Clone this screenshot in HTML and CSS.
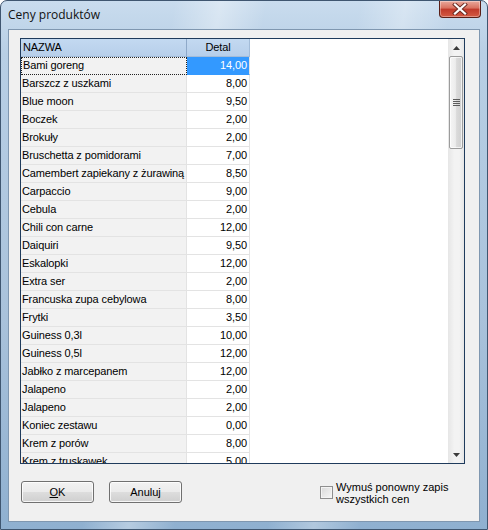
FILE: index.html
```html
<!DOCTYPE html>
<html>
<head>
<meta charset="utf-8">
<link rel="stylesheet" href="styles.css">
</head>
<body>
<div class="window">
  <div class="titlebar">
    <span class="title">Ceny produktów</span>
    <div class="close">
      <svg width="16" height="12" viewBox="0 0 16 12"><path d="M3 1.5 L13 10.5 M13 1.5 L3 10.5" stroke="#6a2a22" stroke-width="4" stroke-linecap="square"/><path d="M3 1.5 L13 10.5 M13 1.5 L3 10.5" stroke="#ffffff" stroke-width="2.2" stroke-linecap="square"/></svg>
    </div>
  </div>
  <div class="client">
    <div class="listbox">
      <div class="table">
        <div class="row head"><div class="c1">NAZWA</div><div class="c2">Detal</div><div class="c3"></div></div>
        <div class="row focus"><div class="c1">Bami goreng</div><div class="c2 sel">14,00</div><div class="c3"></div></div>
        <div class="row"><div class="c1">Barszcz z uszkami</div><div class="c2">8,00</div><div class="c3"></div></div>
        <div class="row"><div class="c1">Blue moon</div><div class="c2">9,50</div><div class="c3"></div></div>
        <div class="row"><div class="c1">Boczek</div><div class="c2">2,00</div><div class="c3"></div></div>
        <div class="row"><div class="c1">Brokuły</div><div class="c2">2,00</div><div class="c3"></div></div>
        <div class="row"><div class="c1">Bruschetta z pomidorami</div><div class="c2">7,00</div><div class="c3"></div></div>
        <div class="row"><div class="c1">Camembert zapiekany z żurawiną</div><div class="c2">8,50</div><div class="c3"></div></div>
        <div class="row"><div class="c1">Carpaccio</div><div class="c2">9,00</div><div class="c3"></div></div>
        <div class="row"><div class="c1">Cebula</div><div class="c2">2,00</div><div class="c3"></div></div>
        <div class="row"><div class="c1">Chili con carne</div><div class="c2">12,00</div><div class="c3"></div></div>
        <div class="row"><div class="c1">Daiquiri</div><div class="c2">9,50</div><div class="c3"></div></div>
        <div class="row"><div class="c1">Eskalopki</div><div class="c2">12,00</div><div class="c3"></div></div>
        <div class="row"><div class="c1">Extra ser</div><div class="c2">2,00</div><div class="c3"></div></div>
        <div class="row"><div class="c1">Francuska zupa cebylowa</div><div class="c2">8,00</div><div class="c3"></div></div>
        <div class="row"><div class="c1">Frytki</div><div class="c2">3,50</div><div class="c3"></div></div>
        <div class="row"><div class="c1">Guiness 0,3l</div><div class="c2">10,00</div><div class="c3"></div></div>
        <div class="row"><div class="c1">Guiness 0,5l</div><div class="c2">12,00</div><div class="c3"></div></div>
        <div class="row"><div class="c1">Jabłko z marcepanem</div><div class="c2">12,00</div><div class="c3"></div></div>
        <div class="row"><div class="c1">Jalapeno</div><div class="c2">2,00</div><div class="c3"></div></div>
        <div class="row"><div class="c1">Jalapeno</div><div class="c2">2,00</div><div class="c3"></div></div>
        <div class="row"><div class="c1">Koniec zestawu</div><div class="c2">0,00</div><div class="c3"></div></div>
        <div class="row"><div class="c1">Krem z porów</div><div class="c2">8,00</div><div class="c3"></div></div>
        <div class="row"><div class="c1">Krem z truskawek</div><div class="c2">5,00</div><div class="c3"></div></div>
      </div>
      <div class="scrollbar">
        <div class="arrow up"><svg width="7" height="4" viewBox="0 0 7 4"><path d="M0 4 L3.5 0 L7 4 Z" fill="#3c3c3c"/></svg></div>
        <div class="thumb"><span class="grip"></span><span class="grip"></span><span class="grip"></span><span class="grip"></span></div>
        <div class="track"></div>
        <div class="arrow down"><svg width="7" height="4" viewBox="0 0 7 4"><path d="M0 0 L7 0 L3.5 4 Z" fill="#3c3c3c"/></svg></div>
      </div>
    </div>
    <div class="bottom">
      <button class="btn"><u>O</u>K</button>
      <button class="btn">Anuluj</button>
      <label class="check">
        <span class="box"></span>
        <span class="label">Wymuś ponowny zapis<br>wszystkich cen</span>
      </label>
    </div>
  </div>
</div>
</body>
</html>
```

FILE: styles.css
```css
html, body {
  margin: 0;
  padding: 0;
}
body {
  width: 488px;
  height: 530px;
  overflow: hidden;
  background: #ffffff;
  font-family: "Liberation Sans", Arial, sans-serif;
  font-size: 11px;
  color: #000;
}
.window {
  box-sizing: border-box;
  width: 488px;
  height: 530px;
  display: flex;
  flex-direction: column;
  border: 1px solid #3f5670;
  border-radius: 7px 7px 0 0;
  background:
    linear-gradient(100deg, rgba(255,255,255,0) 30%, rgba(255,255,255,0.35) 38%, rgba(255,255,255,0) 46%, rgba(255,255,255,0) 62%, rgba(255,255,255,0.3) 70%, rgba(255,255,255,0) 78%),
    linear-gradient(to bottom, #c9dcee 0%, #b8cfe5 10%, #a9c2db 60%, #8fb0d0 100%);
}
.titlebar {
  height: 28px;
  display: flex;
  align-items: flex-start;
  padding-left: 7px;
  padding-right: 6px;
}
.title {
  font-family: "Open Sans", "Noto Sans", sans-serif;
  font-size: 12px;
  line-height: 14px;
  margin-top: 7px;
  color: #111;
}
.close {
  margin-left: auto;
  width: 42px;
  height: 17px;
  box-sizing: border-box;
  border: 1px solid #5a1f17;
  border-top: none;
  border-radius: 0 0 4px 4px;
  background: linear-gradient(to bottom, #e9a99c 0%, #d9705e 45%, #c0392a 50%, #d45a43 100%);
  display: flex;
  align-items: center;
  justify-content: center;
  box-shadow: inset 0 0 0 1px rgba(255,255,255,0.35);
}
.client {
  flex: 1;
  margin: 0 7px 7px 7px;
  box-sizing: border-box;
  border: 1px solid #7f97b0;
  background: #f0f0f0;
  display: flex;
  flex-direction: column;
  padding: 8px 14px 0 11px;
}
.listbox {
  height: 426px;
  box-sizing: border-box;
  border: 1px solid #1f3b5c;
  display: flex;
  background: #ffffff;
}
.table {
  flex: 1;
  overflow: hidden;
}
.row {
  display: grid;
  grid-template-columns: 166px 63px 1fr;
  height: 18px;
}
.row > div {
  box-sizing: border-box;
  height: 18px;
  line-height: 16px;
  white-space: nowrap;
  overflow: hidden;
  letter-spacing: -0.12px;
}
.c1 {
  background: #f2f2f2;
  border-bottom: 1px solid #e3e3e3;
  border-right: 1px solid #e3e3e3;
  padding-left: 1px;
}
.c2 {
  background: #ffffff;
  border-bottom: 1px solid #e3e3e3;
  border-right: 1px solid #e3e3e3;
  text-align: right;
  padding-right: 2px;
}
.c3 {
  background: #ffffff;
}
.head .c1, .head .c2 {
  background: linear-gradient(to bottom, #c3d9f1 0%, #b7cfea 100%);
  border-bottom: 1px solid #a3bcd8;
  border-right: 1px solid #8ea9c9;
}
.head .c2 {
  text-align: center;
  padding-right: 0;
  border-right: 1px solid #a3bcd8;
}
.head .c1 {
  padding-left: 2px;
}
.focus .c1 {
  border: 1px dotted #222;
  line-height: 15px;
}
.c2.sel {
  background: #3399ff;
  color: #ffffff;
  border-bottom-color: #3399ff;
}
.scrollbar {
  width: 16px;
  display: flex;
  flex-direction: column;
  background: linear-gradient(to right, #e6e6e6, #f3f3f3 40%, #f3f3f3 70%, #e6e6e6);
}
.arrow {
  height: 17px;
  display: flex;
  align-items: center;
  justify-content: center;
}
.thumb {
  height: 93px;
  margin: 0 1px;
  box-sizing: border-box;
  border: 1px solid #9c9c9c;
  border-radius: 2px;
  background: linear-gradient(to right, #f5f5f5 0%, #ececec 45%, #dadada 55%, #d0d0d0 100%);
  display: flex;
  flex-direction: column;
  align-items: center;
  justify-content: center;
  gap: 1px;
  box-shadow: inset 0 0 0 1px rgba(255,255,255,0.7);
}
.grip {
  width: 7px;
  height: 1px;
  background: #5c5c5c;
}
.track {
  flex: 1;
}
.bottom {
  display: flex;
  align-items: flex-start;
  margin-top: 17px;
  padding-left: 1px;
}
.btn {
  width: 73px;
  height: 22px;
  box-sizing: border-box;
  margin: 0 15px 0 0;
  padding: 0;
  border: 1px solid #707070;
  border-radius: 3px;
  background: linear-gradient(to bottom, #f2f2f2 0%, #ebebeb 48%, #dddddd 52%, #cfcfcf 100%);
  box-shadow: inset 0 0 0 1px rgba(255,255,255,0.8);
  font-family: "Liberation Sans", Arial, sans-serif;
  font-size: 11px;
  color: #000;
}
.check {
  display: flex;
  align-items: flex-start;
  margin-left: 123px;
  margin-top: 0;
}
.box {
  width: 13px;
  height: 13px;
  box-sizing: border-box;
  border: 1px solid #8f8f8f;
  background: linear-gradient(135deg, #d9d9d9, #f7f7f7);
  box-shadow: inset 0 0 0 1px #f4f4f4;
  margin-top: 5px;
  margin-right: 3px;
}
.label {
  line-height: 12px;
}
```
